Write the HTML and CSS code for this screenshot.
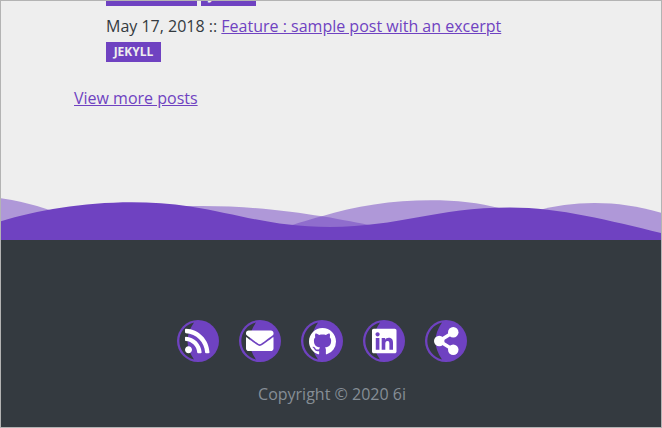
FILE: index.html
```html
<!DOCTYPE html>
<html lang="en">
<head>
<meta charset="utf-8">
<title>Posts</title>
<link rel="stylesheet" href="styles.css">
</head>
<body>
<div class="page">
  <main class="content">
    <ul class="posts">
      <li class="post">
        <div class="tags"><span class="tag tag-wide">PROGRAMMING</span><span class="tag">JEKYLL</span></div>
      </li>
      <li class="post">
        <p class="entry">May 17, 2018 :: <a href="#">Feature : sample post with an excerpt</a></p>
        <div class="tags"><span class="tag">JEKYLL</span></div>
      </li>
    </ul>
    <a class="more" href="#">View more posts</a>
  </main>
  <svg class="waves" viewBox="1 190 660 50" aria-hidden="true">
    <g fill="#6f42c1" fill-opacity=".5">
      <path d="M1 198.3Q22 201 48 209.5L60 214V240H1Z"/>
      <path d="M180 206.3C240 204.500 285 210.500 322 216.300C345 220 357 223 374 225.800V240H180Z"/>
      <path d="M280 229C291 225.500 306 220.500 322 216.300C375 199 450 194.500 500 208.300V240H280Z"/>
      <path d="M535 211C575 200 618 200 661 212.800V240H535Z"/>
    </g>
    <path fill="#6f42c1" d="M1 221.200C50 206.500 120 196.300 190 206.400C240 214 270 227 330 227C400 227 435 207.600 510 207.600C560 207.600 610 221 661 233V240H1Z"/>
  </svg>
  <footer class="footer">
    <nav class="social">
      <a href="#" aria-label="RSS"><svg class="badge" viewBox="0 0 42 42"><circle cx="21" cy="21" r="21"/><path class="crescent" d="M17 2.500A19 19 0 0 0 17 39.500Q4 21 17 2.500Z"/></svg><svg class="icon rss" viewBox="0 0 448 512"><path d="M128.081 415.959c0 35.369-28.672 64.041-64.041 64.041S0 451.328 0 415.959s28.672-64.041 64.041-64.041 64.040 28.673 64.040 64.041zm175.660 47.250c-8.354-154.600-132.185-278.587-286.950-286.950C7.656 175.765 0 183.105 0 192.253v48.069c0 8.415 6.490 15.472 14.887 16.018 111.832 7.284 201.473 96.702 208.772 208.772.547 8.397 7.604 14.887 16.018 14.887h48.069c9.149.001 16.489-7.655 15.995-16.790zm144.249.288C439.596 229.677 251.465 40.445 16.503 32.010 7.473 31.686 0 38.981 0 48.016v48.068c0 8.625 6.835 15.645 15.453 15.999 191.179 7.839 344.627 161.316 352.465 352.465.353 8.618 7.373 15.453 15.999 15.453h48.068c9.034-.001 16.329-7.474 16.005-16.504z"/></svg></a>
      <a href="#" aria-label="Email"><svg class="badge" viewBox="0 0 42 42"><circle cx="21" cy="21" r="21"/><path class="crescent" d="M17 2.500A19 19 0 0 0 17 39.500Q4 21 17 2.500Z"/></svg><svg class="icon mail" viewBox="0 0 512 512"><path d="M502.300 190.800c3.900-3.100 9.700-.2 9.700 4.700V400c0 26.500-21.500 48-48 48H48c-26.500 0-48-21.500-48-48V195.600c0-5 5.700-7.800 9.700-4.700 22.400 17.400 52.100 39.500 154.100 113.600 21.100 15.400 56.700 47.800 92.200 47.600 35.700.3 72-32.800 92.300-47.600 102-74.100 131.600-96.300 154-113.700zM256 320c23.200.4 56.600-29.200 73.400-41.400 132.700-96.300 142.800-104.700 173.400-128.700 5.800-4.500 9.200-11.500 9.200-18.900v-19c0-26.500-21.500-48-48-48H48c-26.500 0-48 21.500-48 48v19c0 7.400 3.400 14.300 9.200 18.900 30.600 23.900 40.700 32.400 173.400 128.700 16.800 12.200 50.200 41.800 73.400 41.400z"/></svg></a>
      <a href="#" aria-label="GitHub"><svg class="badge" viewBox="0 0 42 42"><circle cx="21" cy="21" r="21"/><path class="crescent" d="M17 2.500A19 19 0 0 0 17 39.500Q4 21 17 2.500Z"/></svg><svg class="icon github" viewBox="0 0 16 16"><path d="M8 0C3.580 0 0 3.580 0 8c0 3.540 2.290 6.530 5.470 7.590.4.070.55-.17.55-.38 0-.19-.01-.82-.01-1.490-2.010.37-2.530-.49-2.690-.94-.09-.23-.48-.94-.82-1.130-.28-.15-.68-.52-.01-.53.63-.01 1.080.58 1.230.82.72 1.210 1.870.87 2.330.66.07-.52.28-.87.51-1.070-1.780-.2-3.640-.89-3.640-3.950 0-.87.31-1.590.82-2.150-.08-.2-.36-1.020.08-2.120 0 0 .67-.21 2.200.82.64-.18 1.320-.27 2-.27s1.360.09 2 .27c1.530-1.040 2.200-.82 2.200-.82.44 1.100.16 1.920.08 2.120.51.56.82 1.270.82 2.150 0 3.070-1.870 3.750-3.650 3.950.29.25.54.73.54 1.480 0 1.070-.01 1.930-.01 2.200 0 .21.15.46.55.38A8.013 8.013 0 0 0 16 8c0-4.420-3.580-8-8-8z"/></svg></a>
      <a href="#" aria-label="LinkedIn"><svg class="badge" viewBox="0 0 42 42"><circle cx="21" cy="21" r="21"/><path class="crescent" d="M17 2.500A19 19 0 0 0 17 39.500Q4 21 17 2.500Z"/></svg><svg class="icon" viewBox="0 0 448 512"><path d="M416 32H31.900C14.300 32 0 46.500 0 64.300v383.400C0 465.500 14.300 480 31.900 480H416c17.600 0 32-14.500 32-32.300V64.300c0-17.800-14.400-32.300-32-32.300zM135.400 416H69V202.200h66.500V416zm-33.200-243c-21.300 0-38.500-17.300-38.500-38.500S80.900 96 102.200 96c21.200 0 38.500 17.300 38.500 38.500 0 21.300-17.200 38.500-38.500 38.500zm282.100 243h-66.400V312c0-24.800-.5-56.700-34.500-56.700-34.600 0-39.900 27-39.900 54.900V416h-66.400V202.200h63.700v29.200h.9c8.900-16.800 30.600-34.500 62.900-34.500 67.200 0 79.700 44.300 79.700 101.900V416z"/></svg></a>
      <a href="#" aria-label="Share"><svg class="badge" viewBox="0 0 42 42"><circle cx="21" cy="21" r="21"/><path class="crescent" d="M17 2.500A19 19 0 0 0 17 39.500Q4 21 17 2.500Z"/></svg><svg class="icon" viewBox="0 0 448 512"><path d="M352 96L96 256L352 416" fill="none" stroke="#fff" stroke-width="64"/><circle cx="352" cy="96" r="96"/><circle cx="96" cy="256" r="96"/><circle cx="352" cy="416" r="96"/></svg></a>
    </nav>
    <p class="copyright">Copyright © 2020 6i</p>
  </footer>
</div>
</body>
</html>
```
FILE: styles.css
```css
* { box-sizing: border-box; }

body {
  margin: 0;
  font: 400 16px/24px "Open Sans", sans-serif;
  color: #343a40;
}

.page {
  height: 428px;
  display: flex;
  flex-direction: column;
  overflow: hidden;
  border: 1px solid #b3b3b3;
  background: #eee;
}

.content {
  height: 189px;
  flex: none;
  padding-left: 73px;
  overflow: hidden;
}

a { color: #6f42c1; }

.posts {
  list-style: none;
  margin: -15px 0 24px;
  padding: 0 0 0 32px;
}

.post { margin-bottom: 8px; }

.entry { margin: 0 0 4px; }

.tags {
  display: flex;
  gap: 4px;
}

.tag {
  width: 55px;
  height: 20px;
  background: #6f42c1;
  color: #eee;
  font-size: 12px;
  font-weight: 700;
  line-height: 20px;
  text-align: center;
}

.tag-wide {
  width: 91px;
  font-size: 11px;
}

.more {
  display: inline-block;
}

.waves {
  display: block;
  width: 660px;
  height: 50px;
  flex: none;
}

.footer {
  flex: 1;
  padding-top: 80px;
  background: #343a40;
  text-align: center;
}

.social {
  display: flex;
  justify-content: center;
  gap: 20px;
  padding-right: 18px;
}

.social a {
  display: grid;
  place-items: center;
  width: 42px;
  height: 42px;
}

.badge,
.icon { grid-area: 1 / 1; }

.badge {
  width: 42px;
  height: 42px;
  fill: #6f42c1;
}

.crescent { fill: #343a40; }

.icon {
  height: 28px;
  fill: #fff;
  overflow: visible;
}

.rss { margin-right: 1px; }

.mail { height: 27.5px; }

.github { height: 27px; }

.copyright {
  margin: 20px 0 0;
  padding-left: 2px;
  color: #868e96;
}
```
